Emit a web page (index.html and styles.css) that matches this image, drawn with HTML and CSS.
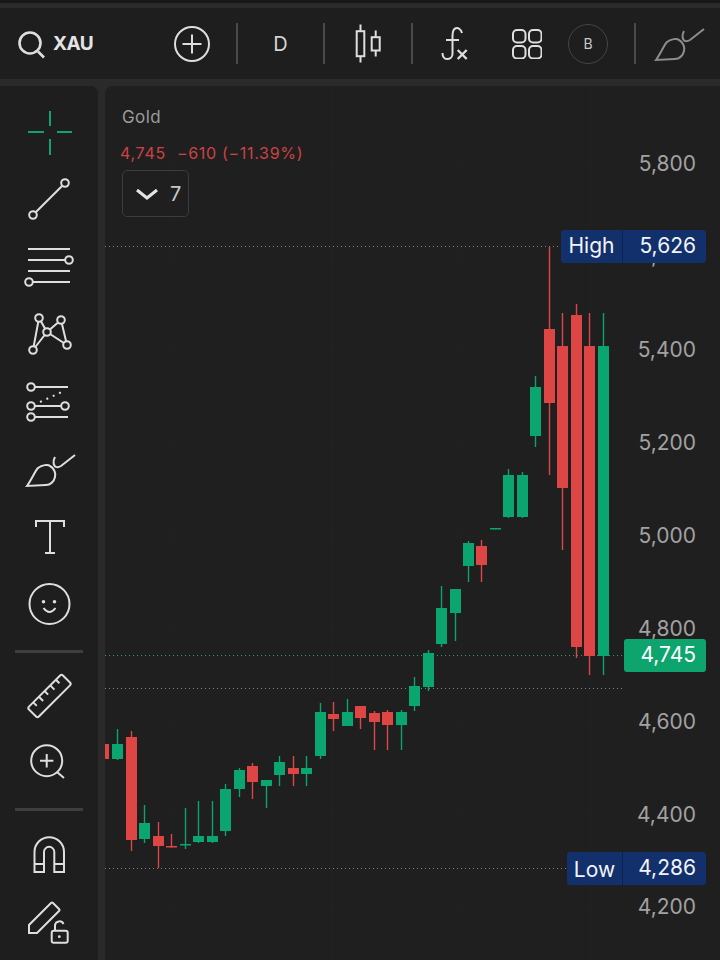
FILE: index.html
```html
<!DOCTYPE html>
<html lang="en">

<head>
    <meta charset="UTF-8">
    <meta name="viewport" content="width=device-width, initial-scale=1.0">
    <title>XAU Chart</title>
    <link rel="stylesheet" href="styles.css">
</head>

<body>
    <div class="top-strip"></div>

    <!-- Top toolbar -->
    <header class="toolbar">
        <div class="search">
            <svg class="icon" width="30" height="30" viewBox="0 0 30 30">
                <circle cx="12" cy="14" r="10.5" stroke-width="2.6" />
                <path d="M20 22.500L26 28.500" stroke-width="2.6" />
            </svg>
            <span class="symbol">XAU</span>
        </div>
        <svg class="icon add" width="36" height="36" viewBox="0 0 36 36">
            <circle cx="18" cy="18" r="17" />
            <path d="M18 8.5V27.5M8.5 18H27.5" />
        </svg>
        <span class="divider first"></span>
        <span class="interval">D</span>
        <span class="divider"></span>
        <div class="cell candles">
            <svg class="icon" width="30" height="40" viewBox="0 0 30 40">
                <rect x="3.7" y="7.2" width="7.6" height="25" />
                <path d="M7.5 .5V7.2M7.5 32.2V38.5" />
                <rect x="18.7" y="13.2" width="8" height="13.3" />
                <path d="M22.7 6.5V13.2M22.7 26.5V32.5" />
            </svg>
        </div>
        <span class="divider"></span>
        <div class="cell formula">
            <svg class="icon" width="30" height="40" viewBox="0 0 30 40">
                <path d="M22 9C21 5 18 4 17 4C14 4 12.5 7 12.5 12V30C12.5 33 10 35 7 35C4 35 2.5 32 2.5 29M6 16H19" />
                <path d="M17.7 26L26.7 35M26.7 26L17.7 35" stroke-width="2.4" />
            </svg>
        </div>
        <svg class="icon layouts" width="30" height="30" viewBox="0 0 30 30">
            <rect x="1" y="1" width="12.5" height="12.5" rx="4" />
            <rect x="17" y="1" width="12.5" height="12.5" rx="4" />
            <rect x="1" y="17" width="12.5" height="12.5" rx="4" />
            <rect x="17" y="17" width="12.5" height="12.5" rx="4" />
        </svg>
        <span class="badge">B</span>
        <span class="divider last"></span>
        <svg class="icon brush-top" width="60" height="60" viewBox="0 0 60 60">
            <path d="M8 45C13 38 16 30 19 27C23 24 29 23 31 25C35 27 37 32 36 36C35 41 31 44 27 44Z" />
            <path d="M36 16C33 22 35 29 42 25L56 14" />
        </svg>
    </header>

    <main class="workspace">
        <!-- Drawing tools -->
        <nav class="sidebar">
            <div class="tool">
                <svg class="icon crosshair" width="60" height="60" viewBox="0 0 60 60">
                    <path d="M31 10V25M31 38V54M9 31H25M38 31H53" />
                </svg>
            </div>
            <div class="tool">
                <svg class="icon" width="60" height="60" viewBox="0 0 60 60">
                    <circle cx="46" cy="14" r="3.8" />
                    <circle cx="14" cy="46" r="3.8" />
                    <path d="M43.3 16.7L16.7 43.3" />
                </svg>
            </div>
            <div class="tool">
                <svg class="icon" width="60" height="60" viewBox="0 0 60 60">
                    <path d="M9 12H51M9 23H46M9 34H51M14 45H51" />
                    <circle cx="50" cy="23" r="3.8" />
                    <circle cx="10" cy="45" r="3.8" />
                </svg>
            </div>
            <div class="tool">
                <svg class="icon" width="60" height="60" viewBox="0 0 60 60">
                    <path d="M20 13L14 45L28 27L20 13M42 15L28 27L48 40L42 15" />
                    <circle class="hollow" cx="20" cy="13" r="3.8" />
                    <circle class="hollow" cx="42" cy="15" r="3.8" />
                    <circle class="hollow" cx="28" cy="27" r="3.8" />
                    <circle class="hollow" cx="14" cy="45" r="3.8" />
                    <circle class="hollow" cx="48" cy="40" r="3.8" />
                </svg>
            </div>
            <div class="tool">
                <svg class="icon" width="60" height="60" viewBox="0 0 60 60">
                    <path d="M16 14H49M16 33H42M16 44H49" />
                    <path d="M21 29L45 18" stroke-dasharray="2 5" />
                    <circle cx="12" cy="14" r="3.8" />
                    <circle cx="12" cy="33" r="3.8" />
                    <circle cx="46" cy="33" r="3.8" />
                    <circle cx="12" cy="44" r="3.8" />
                </svg>
            </div>
            <div class="tool">
                <svg class="icon" width="60" height="60" viewBox="0 0 60 60">
                    <path d="M8 45C13 38 16 30 19 27C23 24 29 23 31 25C35 27 37 32 36 36C35 41 31 44 27 44Z" />
                    <path d="M36 16C33 22 35 29 42 25L56 14" />
                </svg>
            </div>
            <div class="tool">
                <svg class="icon" width="60" height="60" viewBox="0 0 60 60">
                    <path d="M17 18V12H45V18M31 12V44M26 44H36" />
                </svg>
            </div>
            <div class="tool">
                <svg class="icon" width="60" height="60" viewBox="0 0 60 60">
                    <circle cx="30.5" cy="27" r="20" />
                    <path d="M24.5 31Q30.5 39 36.5 31" />
                    <circle class="solid" cx="24.5" cy="24.7" r="1.8" />
                    <circle class="solid" cx="35.5" cy="24.7" r="1.8" />
                </svg>
            </div>
            <div class="sep"></div>
            <div class="tool">
                <svg class="icon" width="60" height="60" viewBox="0 0 60 60">
                    <g transform="translate(30.5 29) rotate(-45)">
                        <rect x="-24" y="-7" width="48" height="14" rx="2" />
                        <path d="M-16 -7V-2M-8 -7V-1M0 -7V-2M8 -7V-1M16 -7V-2" />
                    </g>
                </svg>
            </div>
            <div class="tool">
                <svg class="icon" width="60" height="60" viewBox="0 0 60 60">
                    <circle cx="27.7" cy="25.7" r="15.5" />
                    <path d="M21 25.7H34.4M27.7 19V32.4M38 37L45 43" />
                </svg>
            </div>
            <div class="sep"></div>
            <div class="tool">
                <svg class="icon" width="60" height="60" viewBox="0 0 60 60">
                    <path d="M15.5 47V27A14.75 14.75 0 0 1 45 27V47H35.3V27A5.15 5.15 0 0 0 25 27V47Z" />
                    <path d="M15.5 39H25M35.3 39H45" />
                </svg>
            </div>
            <div class="tool">
                <svg class="icon" width="60" height="60" viewBox="0 0 60 60">
                    <path d="M10 40V32L32 10Q33 9 34 10L40 16Q41 17 40 18L18 40Z" />
                    <rect x="32.7" y="37.7" width="16" height="12" rx="2" />
                    <path d="M36 37.7V32A4.5 4.5 0 0 1 44.5 31" />
                    <circle class="solid" cx="40.3" cy="43.7" r="1.4" />
                </svg>
            </div>
        </nav>

        <!-- Price chart -->
        <section class="chart">
            <svg id="plot" class="plot" width="615" height="874" viewBox="105 86 615 874"></svg>

            <div class="legend">
                <div class="legend-name">Gold</div>
                <div class="legend-quote"><span>4,745</span><span>&minus;610 (&minus;11.39%)</span></div>
                <div class="legend-toggle">
                    <svg width="24" height="14" viewBox="0 0 24 14">
                        <path d="M2 3L12 11L22 3" />
                    </svg>
                    <span>7</span>
                </div>
            </div>

            <div class="tag tag-high"><span class="tag-name">High</span><span class="tag-value">5,626</span></div>
            <div class="tag tag-last"><span class="tag-value">4,745</span></div>
            <div class="tag tag-low"><span class="tag-name">Low</span><span class="tag-value">4,286</span></div>
        </section>
    </main>

    <script src="chart.js"></script>
</body>

</html>
```

FILE: styles.css
```css
* {
    box-sizing: border-box;
}

body {
    width: 720px;
    height: 960px;
    margin: 0;
    overflow: hidden;
    background-color: #2a2a2a;
    font-family: Inter, "Liberation Sans", sans-serif;
}

.top-strip {
    height: 8px;
    border-top: 3px solid #171717;
}

.icon {
    display: block;
    flex: none;
    fill: none;
    stroke: #dedede;
    stroke-width: 2;
}

.icon .hollow {
    fill: #1e1e1e;
}

.icon .solid {
    fill: #dedede;
    stroke: none;
}

/* toolbar */
.toolbar {
    display: flex;
    align-items: center;
    height: 71px;
    padding-left: 18px;
    background-color: #1e1e1e;
}

.search {
    display: flex;
    align-items: center;
    gap: 5px;
    width: 156px;
}

.symbol {
    color: #e4e4e4;
    font-size: 19px;
    font-weight: 700;
    letter-spacing: -0.5px;
}

.divider {
    flex: none;
    width: 2px;
    height: 41px;
    background-color: #4a4a4a;
}

.divider.first {
    margin-left: 26px;
}

.divider.last {
    margin-left: 26px;
}

.interval {
    width: 85px;
    color: #d4d4d4;
    font-size: 20px;
    text-align: center;
}

.cell {
    display: flex;
    justify-content: center;
}

.candles {
    width: 86px;
}

.formula {
    width: 84px;
}

.layouts {
    margin-left: 15px;
}

.badge {
    flex: none;
    width: 40px;
    height: 40px;
    margin-left: 26px;
    border: 1.5px solid #454545;
    border-radius: 50%;
    color: #c8c8c8;
    font-size: 14px;
    line-height: 37px;
    text-align: center;
}

.brush-top {
    margin-top: 3px;
    margin-left: 12px;
    stroke: #8d8d8d;
}

/* main area */
.workspace {
    display: flex;
    gap: 7px;
    height: 874px;
    margin-top: 7px;
}

.sidebar {
    width: 98px;
    padding-top: 11px;
    border-top-right-radius: 8px;
    background-color: #1e1e1e;
}

.tool {
    display: flex;
    align-items: center;
    justify-content: center;
    height: 68px;
}

.crosshair {
    stroke: #0fa36f;
}

.sep {
    height: 3px;
    margin: 9px 15px 10px;
    background-color: #3e3e3e;
}

.chart {
    position: relative;
    flex: 1;
    overflow: hidden;
    border-top-left-radius: 8px;
    background-color: #1f1f1f;
}

.plot {
    display: block;
}

.axis-label {
    fill: #a2a2a2;
    font-size: 21px;
    text-anchor: end;
}

/* legend */
.legend {
    position: absolute;
    top: 20px;
    left: 15px;
}

.legend-name {
    margin-left: 2px;
    color: #9c9c9c;
    font-size: 17px;
    letter-spacing: 0.4px;
    line-height: 22px;
}

.legend-quote {
    display: flex;
    gap: 11px;
    margin-top: 16px;
    color: #cc4343;
    font-size: 16px;
    letter-spacing: 0.7px;
    line-height: 18px;
}

.legend-toggle {
    display: flex;
    align-items: center;
    gap: 11px;
    width: 67px;
    height: 47px;
    margin-top: 8px;
    margin-left: 2px;
    padding-left: 12px;
    border: 1px solid #3c3c3c;
    border-radius: 5px;
    color: #c8c8c8;
    font-size: 20px;
}

.legend-toggle svg {
    fill: none;
    stroke: #e4e4e4;
    stroke-width: 3;
}

/* price tags on the axis */
.tag {
    position: absolute;
    right: 14px;
    display: flex;
    height: 33px;
    border-radius: 3px;
    background-color: #12306b;
    color: #f2f4f8;
    font-size: 21px;
    line-height: 31px;
}

.tag-name {
    width: 62px;
    border-right: 1px solid #0c2350;
    text-align: center;
}

.tag-value {
    width: 83px;
    padding-right: 10px;
    text-align: right;
}

.tag-high {
    top: 144px;
}

.tag-low {
    top: 766px;
}

.tag-low .tag-name {
    width: 56px;
    line-height: 35px;
}

.tag-last {
    top: 553px;
    background-color: #0ea46e;
    color: #ffffff;
}

.tag-last .tag-value {
    width: 82px;
}
```

FILE: chart.js
```js
// x is the left edge of the body, then body top, body bottom, wick top, wick bottom
const GREEN = '#0ba56f';
const RED = '#de4545';

const candles = [
    [RED, 98, 744, 759, 744, 759],
    [GREEN, 112, 744, 759, 729, 760],
    [RED, 126, 737, 840, 731, 851],
    [GREEN, 139, 823, 839, 805, 843],
    [RED, 153, 836, 846, 822, 868],
    [RED, 166, 846, 847.5, 834, 847.5],
    [GREEN, 180, 844, 845.5, 808, 849],
    [GREEN, 193, 836, 842, 801, 843],
    [GREEN, 207, 836, 842, 801, 843],
    [GREEN, 220, 789, 831, 784, 836],
    [GREEN, 234, 770, 789, 768, 797],
    [RED, 247, 766, 782, 763, 799],
    [GREEN, 261, 780, 786, 780, 808],
    [GREEN, 274, 762, 775, 756, 786],
    [RED, 288, 768, 774, 756, 786],
    [GREEN, 301, 768, 774, 756, 786],
    [GREEN, 315, 712, 756, 703, 759],
    [RED, 328, 714, 719, 702, 731],
    [GREEN, 342, 712, 726, 699, 726],
    [RED, 355, 706, 718, 706, 729],
    [RED, 369, 713, 722, 711, 750],
    [RED, 382, 712, 725, 710, 750],
    [GREEN, 396, 712, 725, 710, 750],
    [GREEN, 409, 686, 706, 677, 711],
    [GREEN, 423, 653, 687, 650, 691],
    [GREEN, 436, 608, 644, 586, 647],
    [GREEN, 450, 589, 613, 589, 641],
    [GREEN, 463, 543, 566, 541, 582],
    [RED, 476, 546, 565, 540, 582],
    [GREEN, 490, 528, 529.5, 528, 529.5],
    [GREEN, 503, 475, 517, 469, 518],
    [GREEN, 517, 475, 517, 472, 518],
    [GREEN, 530, 387, 436, 376, 447],
    [RED, 544, 329, 403, 247, 475],
    [RED, 557, 346, 488, 313, 550],
    [RED, 571, 315, 647, 304, 658],
    [RED, 584, 346, 656, 313, 675],
    [GREEN, 598, 346, 656, 313, 675]
];

const axis = [
    ['5,800', 163], ['5,600', 255], ['5,400', 349], ['5,200', 442], ['5,000', 535],
    ['4,800', 628], ['4,600', 721], ['4,400', 814], ['4,200', 906]
];

// horizontal price lines: y, right end, colour
const levels = [
    [246.5, 560, '#808080'],
    [655.5, 623, '#2f9d78'],
    [688.5, 622, '#808080'],
    [868.5, 566, '#808080']
];

const gridColumns = [170, 332, 461, 591];

let out = '';

function line(x1, y1, x2, y2, color, extra) {
    return '<line x1="' + x1 + '" y1="' + y1 + '" x2="' + x2 + '" y2="' + y2 + '" stroke="' + color + '" ' + (extra || '') + '/>';
}

axis.forEach(function (row) {
    out += line(105, row[1] + 1, 720, row[1] + 1, '#222222');
});
gridColumns.forEach(function (x) {
    out += line(x, 86, x, 960, '#222222');
});

levels.forEach(function (row) {
    out += line(105, row[0], row[1], row[0], row[2], 'stroke-dasharray="1 3"');
});

candles.forEach(function (c) {
    const mid = c[1] + 5.5;
    out += line(mid, c[4], mid, c[5], c[0], 'stroke-width="1.4"');
    out += '<rect x="' + c[1] + '" y="' + c[2] + '" width="11" height="' + (c[3] - c[2]) + '" fill="' + c[0] + '"/>';
});

axis.forEach(function (row) {
    out += '<text class="axis-label" x="696" y="' + (row[1] + 8) + '">' + row[0] + '</text>';
});

document.getElementById('plot').innerHTML = out;
```
